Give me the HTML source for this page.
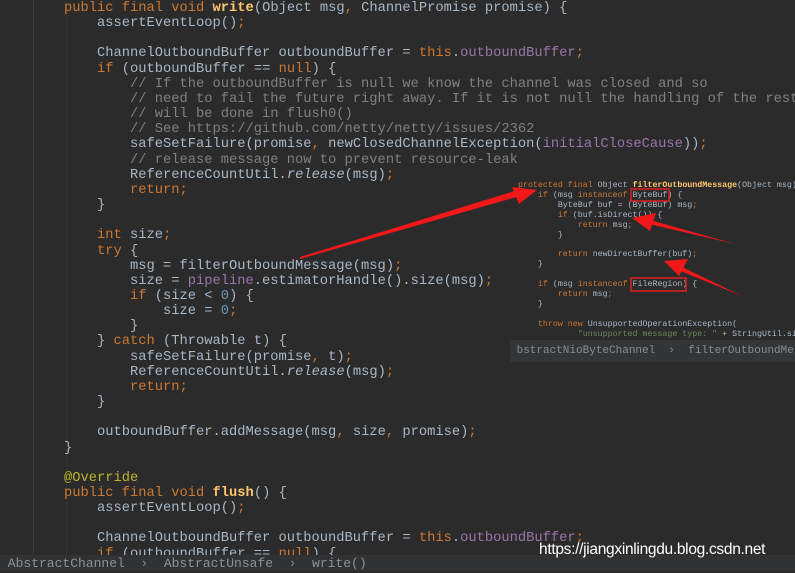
<!DOCTYPE html>
<html><head><meta charset="utf-8"><style>
html,body{margin:0;padding:0}
body{width:795px;height:571px;background:#2b2b2b;overflow:hidden;position:relative;font-family:"Liberation Mono",monospace}
#code{position:absolute;left:-2px;top:1px;font-size:13.75px;line-height:15.15px;color:#a9b7c6;white-space:pre}
.k{color:#cc7832}.c{color:#808080}.f{color:#9876aa}.m{color:#ffc66d;font-weight:bold}.n{color:#6897bb}.a{color:#bbb529}.i{font-style:italic}
.guide{position:absolute;top:0;width:1px;background:#3a3a3a}
#ov{position:absolute;left:510px;top:175px;width:285px;height:187px;background:#2b2b2b;font-size:8.3px;line-height:9.9px;white-space:pre;color:#a9b7c6;overflow:hidden}
#ov .t{position:absolute;left:8px;top:6px}
#ovbar{position:absolute;left:0;top:165px;width:285px;height:22px;background:#333537;color:#8a8d90;font-size:11px;line-height:22px;white-space:pre}
#bar{position:absolute;left:0;top:555px;width:795px;height:16px;background:#303234;color:#8f9194;font-size:13px;line-height:18px;white-space:pre}
#wm{position:absolute;left:539px;top:541px;font-family:"Liberation Sans",sans-serif;font-size:15.5px;color:#fff;letter-spacing:-0.3px}
</style></head><body>
<div class="guide" style="left:33px;height:555px"></div>
<div class="guide" style="left:66px;height:555px;background:#333"></div>
<div id="code"><span class="k">        public final void </span><span class="m">write</span>(Object msg<span class="k">, </span>ChannelPromise promise) {
            assertEventLoop()<span class="k">;</span>

            ChannelOutboundBuffer outboundBuffer = <span class="k">this</span>.<span class="f">outboundBuffer</span><span class="k">;</span>
            <span class="k">if </span>(outboundBuffer == <span class="k">null</span>) {
<span class="c">                // If the outboundBuffer is null we know the channel was closed and so
                // need to fail the future right away. If it is not null the handling of the rest
                // will be done in flush0()
                // See https://github.com/netty/netty/issues/2362</span>
                safeSetFailure(promise<span class="k">, </span>newClosedChannelException(<span class="f">initialCloseCause</span>))<span class="k">;</span>
<span class="c">                // release message now to prevent resource-leak</span>
                ReferenceCountUtil.<span class="i">release</span>(msg)<span class="k">;</span>
<span class="k">                return;</span>
            }

<span class="k">            int </span>size<span class="k">;</span>
<span class="k">            try </span>{
                msg = filterOutboundMessage(msg)<span class="k">;</span>
                size = <span class="f">pipeline</span>.estimatorHandle().size(msg)<span class="k">;</span>
<span class="k">                if </span>(size &lt; <span class="n">0</span>) {
                    size = <span class="n">0</span><span class="k">;</span>
                }
            } <span class="k">catch </span>(Throwable t) {
                safeSetFailure(promise<span class="k">, </span>t)<span class="k">;</span>
                ReferenceCountUtil.<span class="i">release</span>(msg)<span class="k">;</span>
<span class="k">                return;</span>
            }

            outboundBuffer.addMessage(msg<span class="k">, </span>size<span class="k">, </span>promise)<span class="k">;</span>
        }

<span class="a">        @Override</span>
<span class="k">        public final void </span><span class="m">flush</span>() {
            assertEventLoop()<span class="k">;</span>

            ChannelOutboundBuffer outboundBuffer = <span class="k">this</span>.<span class="f">outboundBuffer</span><span class="k">;</span>
<span class="k">            if </span>(outboundBuffer == <span class="k">null</span>) {</div>
<div id="ov"><div class="t"><span class="k">protected final </span>Object <span class="m">filterOutboundMessage</span>(Object msg) {
    <span class="k">if </span>(msg <span class="k">instanceof </span>ByteBuf) {
        ByteBuf buf = (ByteBuf) msg<span class="k">;</span>
<span class="k">        if </span>(buf.isDirect()) {
<span class="k">            return </span>msg<span class="k">;</span>
        }

<span class="k">        return </span>newDirectBuffer(buf)<span class="k">;</span>
    }

<span class="k">    if </span>(msg <span class="k">instanceof </span>FileRegion) {
<span class="k">        return </span>msg<span class="k">;</span>
    }

<span class="k">    throw new </span>UnsupportedOperationException(
            <span style="color:#6a8759">"unsupported message type: " </span>+ StringUtil.si</div>
<div id="ovbar"> bstractNioByteChannel  ›  filterOutboundMessage</div></div>
<div id="bar"> AbstractChannel  ›  AbstractUnsafe  ›  write()</div>
<div id="wm">https://jiangxinlingdu.blog.csdn.net</div>
<svg width="795" height="571" style="position:absolute;left:0;top:0">
<rect x="631" y="189" width="38" height="12" fill="none" stroke="#e02020" stroke-width="1.5"/>
<rect x="631" y="278" width="55" height="13" fill="none" stroke="#e02020" stroke-width="1.5"/>
<g fill="#f01818">
<polygon points="300,259 520,196 518,190 300,257"/>
<polygon points="537,190 512,187 519,204"/>
<polygon points="735,244 650,220 649,224"/>
<polygon points="632,218 656,213 650,231"/>
<polygon points="742,296 680,266 678,270"/>
<polygon points="664,261 688,259 679,276"/>
</g>
</svg>
</body></html>
